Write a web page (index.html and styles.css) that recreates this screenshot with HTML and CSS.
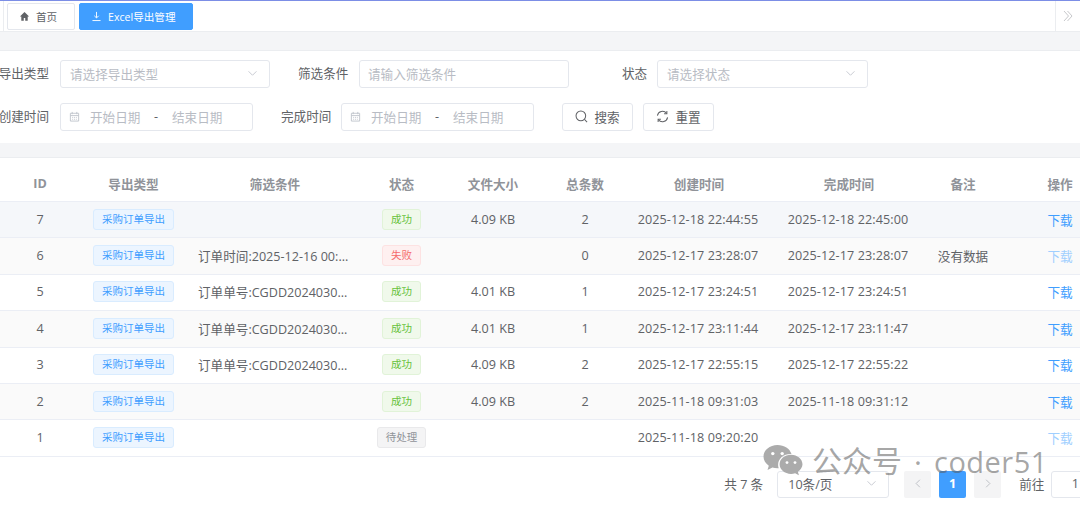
FILE: index.html
```html
<!DOCTYPE html>
<html lang="zh-CN">
<head>
<meta charset="UTF-8">
<title>Excel导出管理</title>
<link rel="stylesheet" href="styles.css">
</head>
<body>
<div id="page">
	<div class="tabs">
		<div class="tabs-stub"></div>
		<a class="tab" href="#">
			<svg class="tab-ico" viewBox="0 0 12 12"><path d="M6 1.2 1 6h1.5v4.6h2.7V7.6h1.6v3h2.7V6H11z" fill="#606266"/></svg>
			首页
		</a>
		<a class="tab tab-active" href="#">
			<svg class="tab-ico" viewBox="0 0 12 12"><path d="M6 1v6.4M3.6 5.2 6 7.6l2.4-2.4M1.6 10.4h8.8" fill="none" stroke="#fff" stroke-width="1"/></svg>
			Excel导出管理
		</a>
		<div class="tabs-more">
			<svg viewBox="0 0 10 12" width="10" height="12"><path d="M1 1l4.5 5L1 11M4.5 1 9 6l-4.5 5" fill="none" stroke="#c8c9cc" stroke-width="1"/></svg>
		</div>
	</div>

	<div class="band band-top"></div>

	<div class="filter">
		<div class="filter-row">
			<label class="lbl lbl-first">导出类型</label>
			<div class="ctl ctl-select">
				<span class="ph">请选择导出类型</span>
				<svg class="arrow" viewBox="0 0 12 8"><path d="M1.5 1.5 6 6l4.5-4.5" fill="none" stroke="#c0c4cc" stroke-width="1"/></svg>
			</div>
			<label class="lbl lbl-cond">筛选条件</label>
			<div class="ctl ctl-input"><span class="ph">请输入筛选条件</span></div>
			<label class="lbl lbl-state">状态</label>
			<div class="ctl ctl-select ctl-state">
				<span class="ph">请选择状态</span>
				<svg class="arrow" viewBox="0 0 12 8"><path d="M1.5 1.5 6 6l4.5-4.5" fill="none" stroke="#c0c4cc" stroke-width="1"/></svg>
			</div>
		</div>
		<div class="filter-row">
			<label class="lbl lbl-first">创建时间</label>
			<div class="ctl ctl-date">
				<svg class="cal" viewBox="0 0 12 12"><path d="M1.5 2.5h9v8.5h-9zM1.5 5h9M3.5 1v2.5M8.500 1v2.500M3.500 7h1M5.500 7h1M7.500 7h1M3.500 9h1M5.500 9h1M7.500 9h1" fill="none" stroke="#c0c4cc" stroke-width="1"/></svg>
				<span class="ph date-txt">开始日期</span>
				<span class="date-sep">-</span>
				<span class="ph date-txt">结束日期</span>
			</div>
			<label class="lbl lbl-done">完成时间</label>
			<div class="ctl ctl-date">
				<svg class="cal" viewBox="0 0 12 12"><path d="M1.5 2.5h9v8.500h-9zM1.500 5h9M3.500 1v2.500M8.500 1v2.500M3.500 7h1M5.500 7h1M7.500 7h1M3.500 9h1M5.500 9h1M7.500 9h1" fill="none" stroke="#c0c4cc" stroke-width="1"/></svg>
				<span class="ph date-txt">开始日期</span>
				<span class="date-sep">-</span>
				<span class="ph date-txt">结束日期</span>
			</div>
			<a class="btn btn-search" href="#">
				<svg viewBox="0 0 14 14" width="13" height="13"><circle cx="6.300" cy="6.300" r="5.200" fill="none" stroke="#606266" stroke-width="1.100"/><path d="M10.200 10.200 13 13" stroke="#606266" stroke-width="1.100"/></svg>
				搜索
			</a>
			<a class="btn btn-reset" href="#">
				<svg viewBox="0 0 14 14" width="13" height="13"><path d="M1.500 6A5.600 5.600 0 0 1 11.400 3.500M12.500 8A5.600 5.600 0 0 1 2.600 10.500" fill="none" stroke="#606266" stroke-width="1.100"/><path d="M11.700 1v3h-3M2.300 13v-3h3" fill="none" stroke="#606266" stroke-width="1.100"/></svg>
				重置
			</a>
		</div>
	</div>

	<div class="band band-mid"></div>

	<div class="grid">
		<div class="row row-head">
			<div>ID</div><div>导出类型</div><div>筛选条件</div><div>状态</div><div>文件大小</div><div>总条数</div><div>创建时间</div><div>完成时间</div><div>备注</div><div>操作</div>
		</div>
		<div class="row row-hover">
			<div>7</div><div><span class="tag">采购订单导出</span></div><div class="cond"></div><div><span class="tag tag-ok">成功</span></div><div>4.09 KB</div><div>2</div><div class="time">2025-12-18 22:44:55</div><div class="time">2025-12-18 22:45:00</div><div></div><div><a class="link" href="#">下载</a></div>
		</div>
		<div class="row row-stripe">
			<div>6</div><div><span class="tag">采购订单导出</span></div><div class="cond">订单时间:2025-12-16 00:...</div><div><span class="tag tag-bad">失败</span></div><div></div><div>0</div><div class="time">2025-12-17 23:28:07</div><div class="time">2025-12-17 23:28:07</div><div>没有数据</div><div><a class="link link-off" href="#">下载</a></div>
		</div>
		<div class="row">
			<div>5</div><div><span class="tag">采购订单导出</span></div><div class="cond">订单单号:CGDD2024030...</div><div><span class="tag tag-ok">成功</span></div><div>4.01 KB</div><div>1</div><div class="time">2025-12-17 23:24:51</div><div class="time">2025-12-17 23:24:51</div><div></div><div><a class="link" href="#">下载</a></div>
		</div>
		<div class="row row-stripe">
			<div>4</div><div><span class="tag">采购订单导出</span></div><div class="cond">订单单号:CGDD2024030...</div><div><span class="tag tag-ok">成功</span></div><div>4.01 KB</div><div>1</div><div class="time">2025-12-17 23:11:44</div><div class="time">2025-12-17 23:11:47</div><div></div><div><a class="link" href="#">下载</a></div>
		</div>
		<div class="row">
			<div>3</div><div><span class="tag">采购订单导出</span></div><div class="cond">订单单号:CGDD2024030...</div><div><span class="tag tag-ok">成功</span></div><div>4.09 KB</div><div>2</div><div class="time">2025-12-17 22:55:15</div><div class="time">2025-12-17 22:55:22</div><div></div><div><a class="link" href="#">下载</a></div>
		</div>
		<div class="row row-stripe">
			<div>2</div><div><span class="tag">采购订单导出</span></div><div class="cond"></div><div><span class="tag tag-ok">成功</span></div><div>4.09 KB</div><div>2</div><div class="time">2025-11-18 09:31:03</div><div class="time">2025-11-18 09:31:12</div><div></div><div><a class="link" href="#">下载</a></div>
		</div>
		<div class="row">
			<div>1</div><div><span class="tag">采购订单导出</span></div><div class="cond"></div><div><span class="tag tag-wait">待处理</span></div><div></div><div></div><div class="time">2025-11-18 09:20:20</div><div></div><div></div><div><a class="link link-off" href="#">下载</a></div>
		</div>
	</div>

	<div class="pager">
		<span class="total">共 7 条</span>
		<div class="size">
			<span>10条/页</span>
			<svg class="arrow" viewBox="0 0 12 8"><path d="M1.500 1.500 6 6l4.500-4.500" fill="none" stroke="#c0c4cc" stroke-width="1"/></svg>
		</div>
		<span class="pg pg-prev"><svg viewBox="0 0 8 12" width="6" height="9"><path d="M6.500 1 1.500 6l5 5" fill="none" stroke="#b4b7bd" stroke-width="1.100"/></svg></span>
		<span class="pg pg-on">1</span>
		<span class="pg pg-next"><svg viewBox="0 0 8 12" width="6" height="9"><path d="M1.500 1l5 5-5 5" fill="none" stroke="#b4b7bd" stroke-width="1.100"/></svg></span>
		<span class="goto">前往</span>
		<div class="jump">1</div>
		<span class="unit">页</span>
	</div>

	<div class="mark">
		<svg class="mark-ico" viewBox="0 0 40 34" width="40" height="34">
			<path d="M14.500 1C6.700 1 .5 6.200.5 12.600c0 3.700 2.100 7 5.300 9.100L4.500 26l4.900-2.500c1.600.4 3.300.7 5.100.7h1.200c-.4-1.200-.6-2.300-.6-3.500 0-5.900 5.500-10.600 12.400-10.600h1C26.900 4.600 21.200 1 14.500 1z" fill="#ababab"/>
			<path d="M39.500 20.300c0-5.300-5.300-9.600-11.400-9.600-6.500 0-11.500 4.300-11.500 9.600s5 9.600 11.500 9.600c1.300 0 2.700-.3 4-.7l3.800 2.100-1-3.500c2.800-2 4.600-4.600 4.600-7.500z" fill="#ababab"/>
			<circle cx="9.800" cy="9.600" r="1.700" fill="#fff"/><circle cx="19.200" cy="9.600" r="1.700" fill="#fff"/>
			<circle cx="24" cy="18.600" r="1.400" fill="#fff"/><circle cx="32" cy="18.600" r="1.400" fill="#fff"/>
		</svg>
		<span class="mark-cn">公众号</span><span class="mark-dot">·</span><span class="mark-en">coder51</span>
	</div>
</div>
</body>
</html>
```

FILE: styles.css
```css
html, body {margin: 0;background-color: #fff;}
a {text-decoration: none;}
#page {position: relative;width: 1080px;height: 506px;overflow: hidden;font-family: "Open Sans", "Noto Sans CJK SC", sans-serif;font-size: 12.6px;color: #606266;}

.tabs {height: 30px;border-top: 1px solid #7c8ee6;border-bottom: 1px solid #ebedf0;display: flex;align-items: center;box-sizing: content-box;}
.tabs-stub {width: 3px;height: 30px;border-right: 1px solid #ebedf0;margin-right: 3px;}
.tab {height: 25px;width: 66px;box-sizing: content-box;border: 1px solid #e4e7ed;border-radius: 2px;background-color: #fff;color: #606266;font-size: 10.6px;display: flex;align-items: center;padding-left: 0;margin-right: 4px;}
.tab-ico {width: 11px;height: 11px;margin: 0 6px 0 11px;flex: none;}
.tab-active {width: 112px;background-color: #409eff;border-color: #409eff;color: #fff;}
.tabs-more {margin-left: auto;width: 24px;height: 30px;border-left: 1px solid #ebedf0;display: flex;align-items: center;justify-content: center;}

.band {background-color: #f4f5f7;}
.band-top {height: 18px;border-bottom: 1px solid #ebedf0;}
.band-mid {height: 14px;border-bottom: 1px solid #ebedf0;}

.filter {height: 92px;padding-top: 9px;box-sizing: border-box;}
.filter-row {display: flex;align-items: center;height: 28px;margin-bottom: 15px;}
.lbl {white-space: nowrap;line-height: 28px;flex: none;}
.lbl-first {width: 49px;margin-right: 11px;display: flex;justify-content: flex-end;}
.lbl-cond {width: 50px;margin: 0 11px 0 28px;}
.lbl-state {width: 25px;margin: 0 10px 0 53px;}
.lbl-done {width: 50px;margin: 0 10px 0 28px;}

.ctl {height: 28px;box-sizing: border-box;border: 1px solid #e4e7ed;border-radius: 3px;display: flex;align-items: center;padding: 0 9px 2px;flex: none;}
.ctl-select {width: 210px;justify-content: space-between;}
.ctl-state {width: 211px;}
.ctl-input {width: 210px;padding-left: 8px;}
.ctl-date {width: 193px;padding-left: 8px;}
.ph {color: #b8bcc4;white-space: nowrap;}
.arrow {width: 11px;height: 7px;margin-right: 2px;}
.cal {width: 11px;height: 11px;flex: none;margin-right: 10px;}
.date-txt {width: 50px;}
.date-sep {width: 32px;text-align: center;color: #606266;}

.btn {height: 28px;width: 71px;box-sizing: border-box;border: 1px solid #e4e7ed;border-radius: 3px;padding-bottom: 2px;color: #606266;display: flex;align-items: center;justify-content: center;gap: 6px;flex: none;}
.btn-search {margin-left: 28px;}
.btn-reset {margin-left: 10px;}

.grid {width: 1118px;}
.row {display: grid;grid-template-columns: 80px 107px 176px 77px 106px 78px 150px 150px 78px 116px;height: 36.4px;box-sizing: border-box;border-bottom: 1px solid #ebeef5;align-items: center;text-align: center;white-space: nowrap;padding-bottom: 1px;}
.row-head {height: 44px;padding: 8px 0 0;color: #909399;font-weight: 700;}
.row-hover {background-color: #f5f7fa;}
.row-stripe {background-color: #fafafa;}
.cond {text-align: left;padding-left: 11px;}
.time {letter-spacing: .1px;padding-right: 2px;}

.tag {display: inline-block;height: 21px;line-height: 19px;box-sizing: border-box;padding: 0 8px;border: 1px solid #d9ecff;border-radius: 3px;background-color: #ecf5ff;color: #409eff;font-size: 10.5px;vertical-align: middle;}
.tag-ok {background-color: #f0f9eb;border-color: #e1f3d8;color: #67c23a;}
.tag-bad {background-color: #fef0f0;border-color: #fde2e2;color: #f56c6c;}
.tag-wait {background-color: #f4f4f5;border-color: #e9e9eb;color: #909399;}

.link {color: #409eff;}
.link-off {color: #a0cfff;}

.pager {width: 1117px;height: 27px;margin-top: 14px;display: flex;align-items: center;justify-content: flex-end;}
.total {margin: 0 14px 2px 0;white-space: nowrap;}
.size {width: 112px;height: 27px;box-sizing: border-box;border: 1px solid #e4e7ed;border-radius: 3px;display: flex;align-items: center;justify-content: space-between;padding: 0 9px 2px 10px;margin-right: 15px;}
.pg {width: 27px;height: 27px;box-sizing: border-box;padding-bottom: 2px;border-radius: 2px;background-color: #f4f4f5;display: flex;align-items: center;justify-content: center;}
.pg-on {margin: 0 8px;background-color: #409eff;color: #fff;font-weight: 700;}
.goto {margin: 0 7px 1px 18px;white-space: nowrap;}
.jump {width: 48px;height: 27px;box-sizing: border-box;border: 1px solid #e4e7ed;border-radius: 3px;padding-bottom: 2px;display: flex;align-items: center;justify-content: center;}
.unit {margin-left: 5px;}

.mark {position: absolute;left: 763px;top: 444px;display: flex;align-items: center;height: 34px;color: rgba(90, 90, 90, .55);white-space: nowrap;}
.mark-ico {margin-right: 9px;}
.mark-cn {font-size: 30px;line-height: 34px;}
.mark-dot {font-size: 30px;width: 32px;text-align: center;}
.mark-en {font-size: 29px;letter-spacing: .5px;font-family: "Open Sans", sans-serif;}
```
